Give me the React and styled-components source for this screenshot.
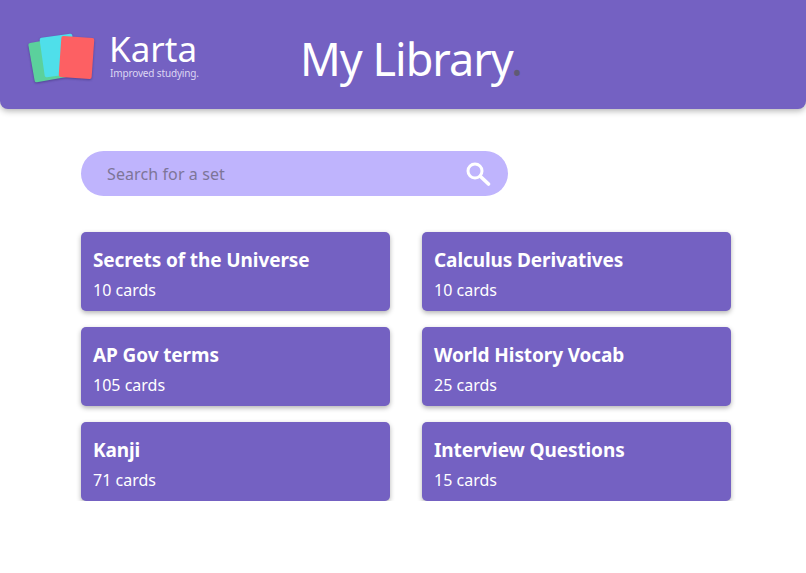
import React from "react";
import styled, { createGlobalStyle } from "styled-components";

const GlobalStyle = createGlobalStyle`
    html, body {
        margin: 0;
        padding: 0;
        background: #fff;
        font-family: "Noto Sans", "Open Sans", sans-serif;
    }
`;

const Header = styled.header`
    height: 109px;
    background: #7461c2;
    border-radius: 0 0 8px 8px;
    box-shadow: 0 2px 6px rgba(0, 0, 0, 0.3);
    display: flex;
    align-items: center;
    padding-left: 28px;
    color: #fff;
`;

const Logo = styled.svg`
    width: 70px;
    height: 54px;
    margin-top: 7px;
    flex: none;
    filter: drop-shadow(0 1px 1px rgba(40, 30, 90, 0.45));
`;

const Brand = styled.div`
    margin-left: 11px;
    width: 191px;
    display: flex;
    flex-direction: column;
`;

const BrandName = styled.span`
    font-size: 35px;
    line-height: 36px;
    letter-spacing: 0;
`;

const Tagline = styled.span`
    font-size: 10px;
    line-height: 12px;
    letter-spacing: -0.15px;
    padding-left: 1px;
    color: #dcd6f3;
`;

const Title = styled.h1`
    margin: 9px 0 0;
    font-size: 45px;
    font-weight: 400;
    line-height: 60px;
    letter-spacing: -1px;
`;

const Dot = styled.span`
    color: #5f5a75;
`;

const Main = styled.main`
    padding: 42px 75px 0 81px;
`;

const Search = styled.div`
    width: 427px;
    height: 45px;
    box-sizing: border-box;
    border-radius: 23px;
    background: #bfb4fd;
    display: flex;
    align-items: center;
    justify-content: space-between;
    padding: 0 17px 0 26px;
    font-size: 16px;
    letter-spacing: 0.1px;
    color: #7d7598;
`;

const SearchIcon = styled.svg`
    width: 26px;
    height: 26px;
`;

const Grid = styled.div`
    margin-top: 36px;
    display: grid;
    grid-template-columns: 309px 309px;
    grid-auto-rows: 79px;
    column-gap: 32px;
    row-gap: 16px;
`;

const Card = styled.div`
    background: #7461c2;
    border-radius: 5px;
    box-shadow: 0 2px 5px rgba(0, 0, 0, 0.3);
    padding: 15px 12px 0;
    color: #fff;
`;

const CardTitle = styled.div`
    font-size: 19px;
    font-weight: 700;
    line-height: 27px;
    letter-spacing: -0.1px;
`;

const CardCount = styled.div`
    margin-top: 5px;
    font-size: 16px;
    line-height: 22px;
`;

const sets = [
    { title: "Secrets of the Universe", count: 10 },
    { title: "Calculus Derivatives", count: 10 },
    { title: "AP Gov terms", count: 105 },
    { title: "World History Vocab", count: 25 },
    { title: "Kanji", count: 71 },
    { title: "Interview Questions", count: 15 },
];

const App = () => (
    <>
        <GlobalStyle />
        <Header>
            <Logo viewBox="0 0 70 54">
                <rect x="3.25" y="9" width="34" height="40" rx="2" fill="#5bd19c" transform="rotate(-10 20.25 29)" />
                <rect x="14" y="4.5" width="33" height="40" rx="2" fill="#4fdfea" transform="rotate(-8 30.5 24.5)" />
                <rect x="32" y="6" width="33" height="41" rx="2" fill="#fd6063" transform="rotate(4 48.5 26.5)" />
            </Logo>
            <Brand>
                <BrandName>Karta</BrandName>
                <Tagline>Improved studying.</Tagline>
            </Brand>
            <Title>
                My Library<Dot>.</Dot>
            </Title>
        </Header>
        <Main>
            <Search>
                <span>Search for a set</span>
                <SearchIcon viewBox="0 0 26 26" fill="none" stroke="#fff" strokeLinecap="round">
                    <circle cx="10" cy="10" r="7" strokeWidth="3" />
                    <path d="M15.5 15.5 L23.5 23" strokeWidth="3.6" />
                </SearchIcon>
            </Search>
            <Grid>
                {sets.map((set) => (
                    <Card key={set.title}>
                        <CardTitle>{set.title}</CardTitle>
                        <CardCount>{set.count} cards</CardCount>
                    </Card>
                ))}
            </Grid>
        </Main>
    </>
);

export default App;
